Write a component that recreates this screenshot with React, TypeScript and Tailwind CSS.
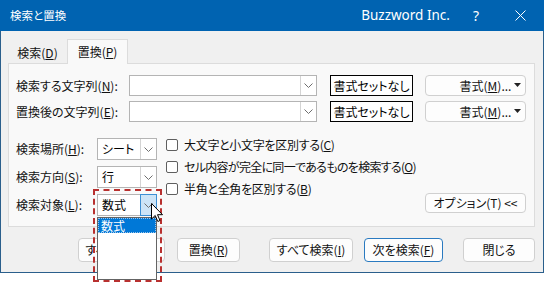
import React from "react";

const JP = { fontFamily: '"Noto Sans CJK JP", "Noto Sans", sans-serif' };

function Chevron() {
  return (
    <svg width="9" height="5" viewBox="0 0 9 5">
      <path d="M0.5 0.5 L4.5 4.5 L8.5 0.5" fill="none" stroke="#6e6e6e" strokeWidth="1" />
    </svg>
  );
}

function U({ c }: { c: string }) {
  return <span className="underline underline-offset-[1px]">{c}</span>;
}

function Combo({ cls, text, active }: { cls: string; text?: string; active?: boolean }) {
  return (
    <div className={`flex bg-white border border-[#b4b4b4] ${cls}`}>
      <div className="flex-1 flex items-center pl-[4px] text-[12px] text-black whitespace-nowrap">{text}</div>
      {active ? (
        <div className="w-[17px] m-[-1px] flex items-center justify-center bg-[#cce4f7] border border-[#3c8fd4]">
          <Chevron />
        </div>
      ) : (
        <div className="w-[16px] flex items-center justify-center border-l border-[#d4d4d4]">
          <Chevron />
        </div>
      )}
    </div>
  );
}

function Check({ cls, children }: { cls: string; children: React.ReactNode }) {
  return (
    <div className="flex items-center h-[22px]">
      <div className="w-[12px] h-[12px] rounded-[2px] border border-[#5f5f5f] bg-white" />
      <div className={`ml-[6px] text-[12px] leading-none text-[#111] whitespace-nowrap ${cls}`}>{children}</div>
    </div>
  );
}

function Btn({ cls, children }: { cls: string; children: React.ReactNode }) {
  return (
    <div
      className={`flex items-center justify-center bg-[#fdfdfd] border border-[#d0d0d0] rounded-[4px] text-[12px] leading-none text-[#111] whitespace-nowrap ${cls}`}
    >
      {children}
    </div>
  );
}

export default function App() {
  return (
    <div
      className="relative w-[544px] h-[284px] bg-white overflow-hidden [font-feature-settings:'palt']"
      style={JP}
    >
      <div className="flex flex-col h-[273px]">
        {/* title bar */}
        <div className="h-[31px] bg-[#0063b1] flex items-center text-white shrink-0">
          <div className="ml-[10px] text-[11.5px] leading-none">検索と置換</div>
          <div
            className="ml-auto text-[13.5px] leading-none"
            style={{ fontFamily: '"Noto Sans", "Open Sans", sans-serif' }}
          >
            Buzzword Inc.
          </div>
          <div className="ml-[23px] text-[14px] leading-none" style={{ fontFamily: '"Noto Sans", sans-serif' }}>
            ?
          </div>
          <div className="ml-[36px] mr-[18px]">
            <svg width="11" height="11" viewBox="0 0 11 11">
              <path d="M0.5 0.5 L10.5 10.5 M10.5 0.5 L0.5 10.5" stroke="white" strokeWidth="1" />
            </svg>
          </div>
        </div>
        {/* body */}
        <div className="flex-1 bg-[#f0f0f0] border-x border-b border-[#2a5f8c] px-[7px] pt-[8px]">
          {/* tabs */}
          <div className="flex items-end h-[24px]">
            <div className="w-[59px] h-[21px] flex items-center justify-center text-[12px] leading-none text-[#111]">
              <span>
                検索(<U c="D" />)
              </span>
            </div>
            <div className="relative z-10 -mb-px w-[61px] h-[25px] bg-[#f9f9f9] border border-b-0 border-[#dcdcdc] flex items-center justify-center text-[12px] leading-none text-[#111]">
              <span>
                置換(<U c="P" />)
              </span>
            </div>
          </div>
          {/* panel */}
          <div className="w-[527px] h-[164px] border border-[#dcdcdc] bg-[#f9f9f9] pt-[11px] pl-[7px] pr-[8px]">
            <div className="flex items-center h-[21px]">
              <div className="w-[113px] text-[12px] leading-none text-[#111] whitespace-nowrap">
                検索する文字列(<U c="N" />):
              </div>
              <Combo cls="w-[188px] h-[21px]" />
              <div className="ml-[13px] w-[83px] h-[21px] border border-black bg-white flex items-center justify-center text-[12px] leading-none whitespace-nowrap">
                書式セットなし
              </div>
              <Btn cls="ml-[12px] w-[101px] h-[21px] relative">
                <span className="ml-[20px]">
                  書式(<U c="M" />)...
                </span>
                <span className="absolute right-[4px] top-[7px]">
                  <svg width="7" height="4" viewBox="0 0 7 4">
                    <path d="M0 0 L7 0 L3.5 4 Z" fill="#222" />
                  </svg>
                </span>
              </Btn>
            </div>
            <div className="flex items-center h-[21px] mt-[5px]">
              <div className="w-[113px] text-[12px] leading-none text-[#111] whitespace-nowrap">
                置換後の文字列(<U c="E" />):
              </div>
              <Combo cls="w-[188px] h-[21px]" />
              <div className="ml-[13px] w-[83px] h-[21px] border border-black bg-white flex items-center justify-center text-[12px] leading-none whitespace-nowrap">
                書式セットなし
              </div>
              <Btn cls="ml-[12px] w-[101px] h-[21px] relative">
                <span className="ml-[20px]">
                  書式(<U c="M" />)...
                </span>
                <span className="absolute right-[4px] top-[7px]">
                  <svg width="7" height="4" viewBox="0 0 7 4">
                    <path d="M0 0 L7 0 L3.5 4 Z" fill="#222" />
                  </svg>
                </span>
              </Btn>
            </div>
            {/* lower */}
            <div className="flex mt-[12px]">
              <div className="flex flex-col gap-[6px] pt-[4px]">
                <div className="flex items-center h-[22px]">
                  <div className="w-[81px] text-[12px] leading-none text-[#111] whitespace-nowrap">
                    検索場所(<U c="H" />):
                  </div>
                  <Combo cls="w-[60px] h-[22px]" text="シート" />
                </div>
                <div className="flex items-center h-[22px]">
                  <div className="w-[81px] text-[12px] leading-none text-[#111] whitespace-nowrap">
                    検索方向(<U c="S" />):
                  </div>
                  <Combo cls="w-[60px] h-[22px]" text="行" />
                </div>
                <div className="flex items-center h-[22px]">
                  <div className="w-[81px] text-[12px] leading-none text-[#111] whitespace-nowrap">
                    検索対象(<U c="L" />):
                  </div>
                  <Combo cls="w-[60px] h-[22px]" text="数式" active />
                </div>
              </div>
              <div className="ml-[9px] flex flex-col">
                <Check cls="tracking-[-0.3px]">
                  大文字と小文字を区別する(<U c="C" />)
                </Check>
                <Check cls="tracking-[-0.7px]">
                  セル内容が完全に同一であるものを検索する(<U c="O" />)
                </Check>
                <Check cls="tracking-[-0.3px]">
                  半角と全角を区別する(<U c="B" />)
                </Check>
              </div>
              <Btn cls="ml-auto mt-[59px] w-[101px] h-[20px]">
                オプション(T) &lt;&lt;
              </Btn>
            </div>
          </div>
          {/* bottom buttons */}
          <div className="flex mt-[11px]">
            <Btn cls="ml-[70px] w-[87px] h-[24px]">
              すべて置換(<U c="A" />)
            </Btn>
            <Btn cls="ml-[12px] w-[63px] h-[24px]">
              置換(<U c="R" />)
            </Btn>
            <Btn cls="ml-[29px] w-[84px] h-[24px]">
              すべて検索(<U c="I" />)
            </Btn>
            <Btn cls="ml-[11px] w-[79px] h-[24px] !border-[#2a7ac0]">
              次を検索(<U c="F" />)
            </Btn>
            <Btn cls="ml-[20px] w-[72px] h-[24px]">閉じる</Btn>
          </div>
        </div>
      </div>

      {/* dropdown list overlay */}
      <div className="absolute left-[97px] top-[217px] w-[60px] h-[63px] bg-white border border-[#646464]">
        <div className="h-[15px] bg-[#0078d7] border border-dotted border-[#9cc6ec] flex items-center pl-[2px] text-[12px] leading-none text-white">
          数式
        </div>
      </div>
      {/* red dashed highlight */}
      <div className="absolute left-[93px] top-[189px] w-[69px] h-[93px] border-2 border-dashed border-[#b8302f]" />
      {/* mouse cursor */}
      <svg className="absolute left-[151px] top-[203px]" width="13" height="20" viewBox="0 0 13 20">
        <path
          d="M0.5 0.5 L0.5 16 L4.2 12.5 L6.8 18.5 L9 17.5 L6.5 11.7 L11.5 11.7 Z"
          fill="white"
          stroke="black"
          strokeWidth="1"
          strokeLinejoin="round"
        />
      </svg>
    </div>
  );
}
